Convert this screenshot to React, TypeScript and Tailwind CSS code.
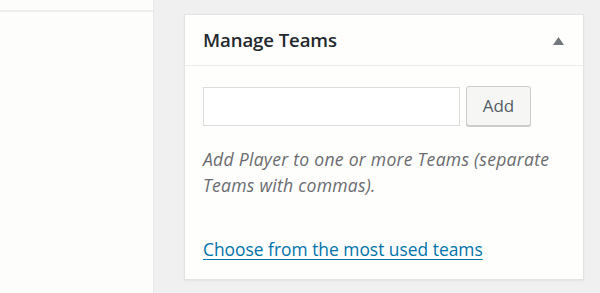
export default function App() {
  return (
    <div
      className="flex h-[293px] w-[600px] overflow-hidden bg-[#f0f0f1] text-[#23282d]"
      style={{ fontFamily: '"Open Sans", "Noto Sans", sans-serif' }}
    >
      {/* Main content edge */}
      <div className="w-[154px] shrink-0 border-r border-[#e8e8e8] bg-[#fdfdfc]">
        <div className="h-[12px] border-b-2 border-[#eeeeee]" />
      </div>

      {/* Sidebar */}
      <div className="flex-1 pl-[30px] pr-[16px] pt-[14px]">
        <div className="h-[266px] border border-[#e3e3e3] bg-[#fefefd] shadow-[0_1px_2px_rgba(0,0,0,0.06)]">
          <div className="flex h-[51px] items-center justify-between border-b border-[#ececec] pl-[18px] pr-[19px]">
            <h2 className="text-[18.6px] font-semibold tracking-[-0.1px]">Manage Teams</h2>
            <svg width="11" height="8" viewBox="0 0 11 8" className="mt-[2px]">
              <path d="M5.5 0 L11 8 L0 8 Z" fill="#72777c" />
            </svg>
          </div>

          <div className="pl-[18px] pt-[20px]">
            <div className="flex items-center gap-[6px]">
              <input
                type="text"
                className="h-[39px] w-[257px] border border-[#dcdcdc] bg-white outline-none"
              />
              <button className="h-[40px] w-[65px] rounded-[3px] border border-[#cccccc] bg-[#f6f6f5] text-[17px] text-[#555d66] shadow-[0_1px_0_#cccccc]">
                Add
              </button>
            </div>

            <p className="mt-[20px] pr-[8px] text-[17.6px] italic leading-[26px] tracking-[0.25px] text-[#6b6c70]">
              Add Player to one or more Teams (separate Teams with commas).
            </p>

            <a
              href="#"
              className="mt-[38px] block text-[17.4px] leading-[26px] text-[#0073aa] underline underline-offset-[3px]"
            >
              Choose from the most used teams
            </a>
          </div>
        </div>
      </div>
    </div>
  );
}
